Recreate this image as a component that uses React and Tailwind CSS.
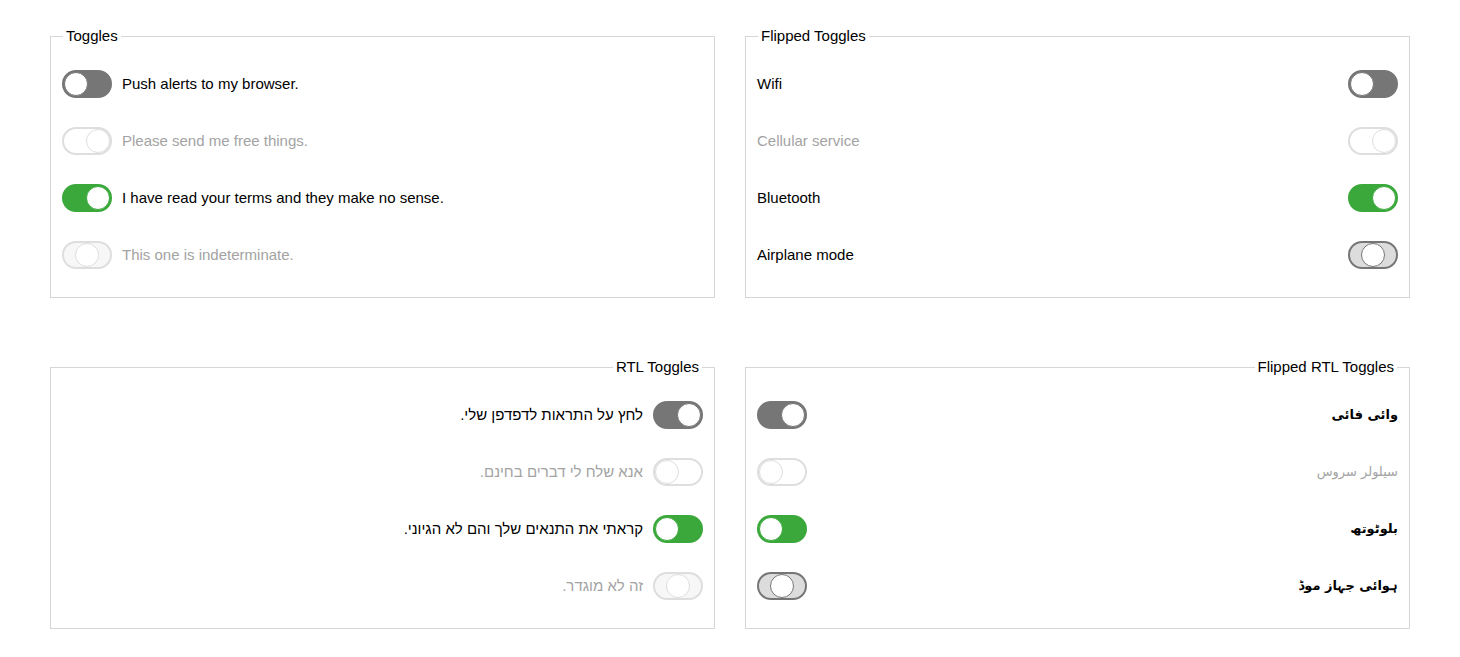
import React from "react";

const font = { fontFamily: "'Helvetica Neue', Helvetica, 'Liberation Sans', Arial, sans-serif" };

function Toggle({ state }) {
  // state: off | disabled | on | mixed | mixed-disabled
  const track = {
    off: "bg-[#767676] border-[#767676] justify-start",
    disabled: "bg-white border-[#dedede] justify-end",
    on: "bg-[#3aa83a] border-[#3aa83a] justify-end",
    mixed: "bg-[#dcdcdc] border-[#767676] justify-center",
    "mixed-disabled": "bg-[#f7f7f7] border-[#dedede] justify-center",
  }[state];
  const knob = {
    off: "border-[#767676]",
    disabled: "border-[#dedede]",
    on: "border-[#3aa83a]",
    mixed: "border-[#767676]",
    "mixed-disabled": "border-[#dedede]",
  }[state];
  return (
    <span className={`flex shrink-0 w-[50px] h-[28px] rounded-full border-2 ${track}`}>
      <span className={`w-6 h-6 rounded-full bg-white border ${knob}`}></span>
    </span>
  );
}

function Row({ label, state, flipped, urdu }) {
  const dim = state === "disabled" || state === "mixed-disabled";
  const text = (
    <span
      className={`${urdu ? "text-[13px]" : "text-[15px]"} ${dim ? "text-[#a3a3a3]" : "text-black"} ${urdu && !dim ? "font-bold" : ""}`}
      style={urdu ? { fontFamily: "'DejaVu Sans', 'Noto Sans', sans-serif" } : undefined}
    >
      {label}
    </span>
  );
  return (
    <div className={`flex items-center h-[28px] ${flipped ? "justify-between" : "gap-[10px]"}`}>
      {flipped ? (
        <>
          {text}
          <Toggle state={state} />
        </>
      ) : (
        <>
          <Toggle state={state} />
          {text}
        </>
      )}
    </div>
  );
}

function Box({ title, rows, flipped, rtl, urdu }) {
  return (
    <fieldset
      dir={rtl ? "rtl" : "ltr"}
      className="border border-[#d6d6d6] px-[11px] pb-[28px] pt-[25px]"
    >
      <legend className="px-[3px] mx-[1px] text-[15px] text-black leading-[18px]">{title}</legend>
      <div className="flex flex-col gap-[29px]">
        {rows.map((r) => (
          <Row key={r[0]} label={r[0]} state={r[1]} flipped={flipped} urdu={urdu} />
        ))}
      </div>
    </fieldset>
  );
}

export default function App() {
  return (
    <div className="min-h-screen bg-white px-[50px] pt-[27px]" style={font}>
      <div className="grid grid-cols-2 gap-x-[30px] gap-y-[60px]">
        <Box
          title="Toggles"
          rows={[
            ["Push alerts to my browser.", "off"],
            ["Please send me free things.", "disabled"],
            ["I have read your terms and they make no sense.", "on"],
            ["This one is indeterminate.", "mixed-disabled"],
          ]}
        />
        <Box
          title="Flipped Toggles"
          flipped
          rows={[
            ["Wifi", "off"],
            ["Cellular service", "disabled"],
            ["Bluetooth", "on"],
            ["Airplane mode", "mixed"],
          ]}
        />
        <Box
          title="RTL Toggles"
          rtl
          rows={[
            ["לחץ על התראות לדפדפן שלי.", "off"],
            ["אנא שלח לי דברים בחינם.", "disabled"],
            ["קראתי את התנאים שלך והם לא הגיוני.", "on"],
            ["זה לא מוגדר.", "mixed-disabled"],
          ]}
        />
        <Box
          title="Flipped RTL Toggles"
          rtl
          flipped
          urdu
          rows={[
            ["وائی فائی", "off"],
            ["سیلولر سروس", "disabled"],
            ["بلوٹوتھ", "on"],
            ["ہوائی جہاز موڈ", "mixed"],
          ]}
        />
      </div>
    </div>
  );
}
